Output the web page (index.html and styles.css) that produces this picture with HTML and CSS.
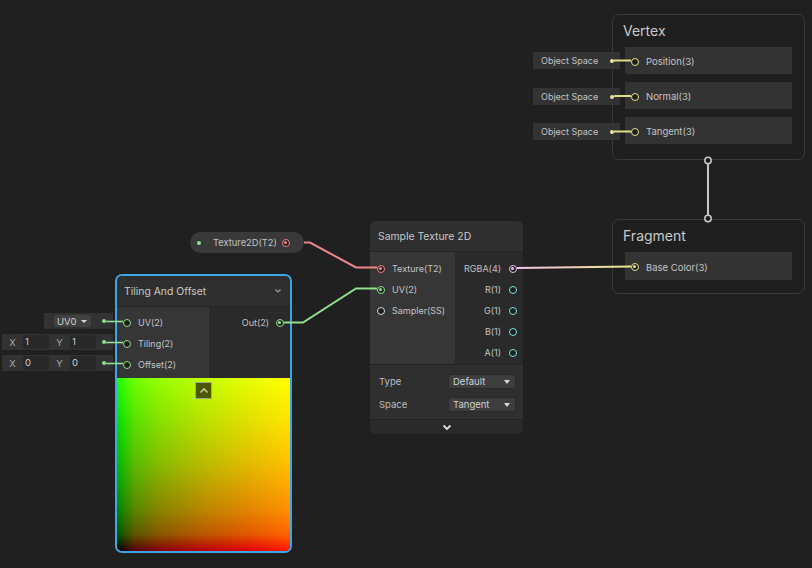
FILE: index.html
```html
<!DOCTYPE html>
<html>
<head>
<meta charset="utf-8">
<link rel="stylesheet" href="styles.css">
</head>
<body>
<div class="graph">

  <!-- Vertex context -->
  <div class="context vertex">
    <div class="ctx-title">Vertex</div>
    <div class="blocks">
      <div class="block"><span class="port yellow"></span><span class="lbl">Position(3)</span></div>
      <div class="block"><span class="port yellow"></span><span class="lbl">Normal(3)</span></div>
      <div class="block"><span class="port yellow"></span><span class="lbl">Tangent(3)</span></div>
    </div>
  </div>

  <div class="os-field os1"><span>Object Space</span><span class="dot ydot"></span></div>
  <div class="os-field os2"><span>Object Space</span><span class="dot ydot"></span></div>
  <div class="os-field os3"><span>Object Space</span><span class="dot ydot"></span></div>

  <!-- Fragment context -->
  <div class="context fragment">
    <div class="ctx-title">Fragment</div>
    <div class="blocks">
      <div class="block tall"><span class="port yellow on"></span><span class="lbl">Base Color(3)</span></div>
    </div>
  </div>

  <!-- Texture property -->
  <div class="prop">
    <span class="dot gdot"></span>
    <span class="prop-lbl">Texture2D(T2)</span>
    <span class="port red on"></span>
  </div>

  <!-- Sample Texture 2D -->
  <div class="node sample">
    <div class="node-head">Sample Texture 2D</div>
    <div class="node-body">
      <div class="col-in">
        <div class="row"><span class="port red on"></span><span class="lbl">Texture(T2)</span></div>
        <div class="row"><span class="port green on"></span><span class="lbl">UV(2)</span></div>
        <div class="row"><span class="port white"></span><span class="lbl">Sampler(SS)</span></div>
      </div>
      <div class="col-out">
        <div class="row"><span class="lbl">RGBA(4)</span><span class="port pink on"></span></div>
        <div class="row"><span class="lbl">R(1)</span><span class="port cyan"></span></div>
        <div class="row"><span class="lbl">G(1)</span><span class="port cyan"></span></div>
        <div class="row"><span class="lbl">B(1)</span><span class="port cyan"></span></div>
        <div class="row"><span class="lbl">A(1)</span><span class="port cyan"></span></div>
      </div>
    </div>
    <div class="settings">
      <div class="set-row"><span class="set-lbl">Type</span><span class="dropdown"><span>Default</span><span class="tri"></span></span></div>
      <div class="set-row"><span class="set-lbl">Space</span><span class="dropdown"><span>Tangent</span><span class="tri"></span></span></div>
    </div>
    <div class="node-foot">
      <svg width="10" height="7" viewBox="0 0 10 7"><polyline points="1.5,1.5 5,5 8.5,1.5" fill="none" stroke="#e0e0e0" stroke-width="1.8"/></svg>
    </div>
  </div>

  <!-- Inline inputs for Tiling And Offset -->
  <div class="inline in-uv">
    <span class="mini-dd"><span>UV0</span><span class="tri small"></span></span>
    <span class="dot gdot"></span>
  </div>
  <div class="inline in-tiling">
    <span class="axis">X</span><span class="num">1</span>
    <span class="axis">Y</span><span class="num">1</span>
    <span class="dot gdot"></span>
  </div>
  <div class="inline in-offset">
    <span class="axis">X</span><span class="num">0</span>
    <span class="axis">Y</span><span class="num">0</span>
    <span class="dot gdot"></span>
  </div>

  <!-- Tiling And Offset -->
  <div class="node tiling">
    <div class="node-head tiling-head">
      <span>Tiling And Offset</span>
      <svg width="8" height="6" viewBox="0 0 8 6"><polyline points="1.5,1.5 4,4 6.5,1.5" fill="none" stroke="#9a9a9a" stroke-width="1.2"/></svg>
    </div>
    <div class="node-body tiling-body">
      <div class="col-in">
        <div class="row"><span class="port green"></span><span class="lbl">UV(2)</span></div>
        <div class="row"><span class="port green"></span><span class="lbl">Tiling(2)</span></div>
        <div class="row"><span class="port green"></span><span class="lbl">Offset(2)</span></div>
      </div>
      <div class="col-out">
        <div class="row"><span class="lbl">Out(2)</span><span class="port green on"></span></div>
      </div>
    </div>
    <div class="preview">
      <span class="collapse">
        <svg width="10" height="7" viewBox="0 0 10 7"><polyline points="1.5,5.5 5,2 8.5,5.5" fill="none" stroke="#c8c8a8" stroke-width="1.6"/></svg>
      </span>
    </div>
  </div>

  <!-- Edges -->
  <svg class="edges" width="812" height="568" viewBox="0 0 812 568">
    <defs>
      <linearGradient id="py" x1="517" y1="0" x2="631" y2="0" gradientUnits="userSpaceOnUse">
        <stop offset="0" stop-color="#f4c2ec"/>
        <stop offset="1" stop-color="#e6e68a"/>
      </linearGradient>
    </defs>
    <polyline points="304,242.5 310,242.5 356,267.5 377,267.5" fill="none" stroke="#ef8585" stroke-width="2"/>
    <polyline points="284,322.5 303,322.5 356,288.5 377,288.5" fill="none" stroke="#8fe08a" stroke-width="2"/>
    <line x1="517" y1="268" x2="631" y2="266.5" stroke="url(#py)" stroke-width="2"/>
    <line x1="708" y1="164" x2="708" y2="215" stroke="#c8c8c8" stroke-width="2"/>
    <circle cx="708" cy="160.5" r="3.2" fill="#1f1f1f" stroke="#c8c8c8" stroke-width="1.5"/>
    <circle cx="708" cy="218.5" r="3.2" fill="#1f1f1f" stroke="#c8c8c8" stroke-width="1.5"/>
    <line x1="614" y1="60.5" x2="631" y2="60.5" stroke="#dede86" stroke-width="2"/>
    <line x1="614" y1="96" x2="631" y2="96" stroke="#dede86" stroke-width="2"/>
    <line x1="614" y1="131.5" x2="631" y2="131.5" stroke="#dede86" stroke-width="2"/>
    <line x1="106" y1="321.5" x2="123" y2="321.5" stroke="#8fe08a" stroke-width="1.6"/>
    <line x1="106" y1="342.5" x2="123" y2="342.5" stroke="#8fe08a" stroke-width="1.6"/>
    <line x1="106" y1="363.5" x2="123" y2="363.5" stroke="#8fe08a" stroke-width="1.6"/>
  </svg>
</div>
</body>
</html>
```

FILE: styles.css
```css
html, body {
  margin: 0;
  padding: 0;
  background: #202020;
}

body {
  font-family: Inter, "Noto Sans", "Liberation Sans", sans-serif;
  color: #c4c4c4;
  font-size: 9px;
}

.graph {
  position: relative;
  width: 812px;
  height: 568px;
  overflow: hidden;
  background: #202020;
}

.edges {
  position: absolute;
  left: 0;
  top: 0;
  pointer-events: none;
}

/* Ports */
.port {
  position: relative;
  flex: none;
  width: 8px;
  height: 8px;
  border-radius: 50%;
  border: 1.5px solid #c8c8c8;
  box-sizing: border-box;
  background: #1e1e1e;
}
.port.on::after {
  content: "";
  position: absolute;
  left: 1px;
  top: 1px;
  width: 3px;
  height: 3px;
  border-radius: 50%;
  background: currentColor;
}
.port.yellow { border-color: #e4e48a; color: #e4e48a; }
.port.red { border-color: #ef8585; color: #ef8585; }
.port.green { border-color: #8fe08a; color: #8fe08a; }
.port.pink { border-color: #f0c0ea; color: #f0c0ea; }
.port.cyan { border-color: #7fe0e4; color: #7fe0e4; }
.port.white { border-color: #d8d8d8; color: #d8d8d8; }

.lbl { font-size: 9px; }

.dot {
  flex: none;
  width: 4px;
  height: 4px;
  border-radius: 50%;
}
.ydot { background: #e8e89a; }
.gdot { background: #8fe08a; }

/* Contexts */
.context {
  position: absolute;
  box-sizing: border-box;
  border: 1px solid #3a3a3a;
  border-radius: 7px;
  background: #1f1f1f;
  padding: 0 12px;
}
.vertex { left: 612px; top: 14px; width: 193px; height: 146px; }
.fragment { left: 612px; top: 219px; width: 193px; height: 75px; }

.ctx-title {
  height: 32px;
  line-height: 32px;
  margin-left: -2px;
  font-size: 14px;
  color: #cacaca;
}

.blocks {
  display: flex;
  flex-direction: column;
  gap: 8px;
}
.block {
  height: 27px;
  background: #333333;
  display: flex;
  align-items: center;
  padding-left: 6px;
  padding-top: 2px;
  box-sizing: border-box;
  gap: 7px;
}
.block.tall { height: 28px; }
.block .lbl { font-size: 9.5px; }

.os-field {
  position: absolute;
  left: 533px;
  width: 87px;
  height: 17px;
  box-sizing: border-box;
  background: #333333;
  display: flex;
  align-items: center;
  justify-content: space-between;
  padding: 0 6px 0 8px;
  font-size: 9px;
  color: #c4c4c4;
}
.os1 { top: 52px; }
.os2 { top: 88px; }
.os3 { top: 123px; }

/* Property pill */
.prop {
  position: absolute;
  left: 190px;
  top: 232px;
  width: 114px;
  height: 21px;
  border-radius: 10.5px;
  background: #393939;
  display: flex;
  align-items: center;
  box-sizing: border-box;
  padding: 0 14px 0 7px;
}
.prop-lbl {
  margin-left: 12px;
  flex: 1;
  font-size: 9.3px;
}

/* Nodes */
.node {
  position: absolute;
  box-sizing: border-box;
  background: #2a2a2a;
  border-radius: 6px;
  overflow: hidden;
}
.node-head {
  height: 31px;
  line-height: 31px;
  padding-left: 8px;
  background: #2f2f2f;
  font-size: 10.4px;
  color: #c8c8c8;
  border-bottom: 1px solid #242424;
  box-sizing: border-box;
}
.node-body {
  display: flex;
  border-bottom: 1px solid #232323;
}
.col-in {
  background: #363636;
  padding-top: 6px;
  box-sizing: border-box;
}
.col-out {
  flex: 1;
  background: #2a2a2a;
  padding-top: 6px;
  box-sizing: border-box;
}
.row {
  height: 21px;
  display: flex;
  align-items: center;
}
.col-in .row { padding-left: 7px; gap: 7px; }
.col-out .row { justify-content: flex-end; padding-right: 6px; gap: 8px; }

.sample { left: 370px; top: 221px; width: 153px; }
.sample .node-body { height: 112px; }
.sample .col-in { width: 85px; }

.settings {
  height: 55px;
  background: #2f2f2f;
  padding-top: 5px;
  box-sizing: border-box;
  border-bottom: 1px solid #222;
}
.set-row {
  height: 23px;
  display: flex;
  align-items: center;
  padding: 0 7px 0 9px;
}
.set-lbl { flex: 1; font-size: 9.5px; color: #bdbdbd; }
.dropdown {
  width: 68px;
  height: 15px;
  box-sizing: border-box;
  background: #3e3e3e;
  border: 1px solid #2a2a2a;
  border-radius: 3px;
  display: flex;
  align-items: center;
  justify-content: space-between;
  padding: 0 5px 0 4px;
  font-size: 9.5px;
  color: #d0d0d0;
}
.tri {
  width: 0;
  height: 0;
  border-left: 3.5px solid transparent;
  border-right: 3.5px solid transparent;
  border-top: 4px solid #d8d8d8;
}
.tri.small {
  border-left-width: 3px;
  border-right-width: 3px;
  border-top-width: 3.5px;
}
.node-foot {
  height: 14px;
  background: #2a2a2a;
  display: flex;
  align-items: center;
  justify-content: center;
}

/* Tiling and offset */
.tiling {
  left: 115px;
  top: 274px;
  width: 177px;
  height: 279px;
  border: 2px solid #3ca6e6;
  border-radius: 7px;
}
.tiling-head {
  display: flex;
  align-items: center;
  justify-content: space-between;
  padding: 0 8px 0 7px;
  height: 31px;
}
.tiling .node-body { height: 71px; padding: 0; border-bottom: none; }
.tiling .col-in { width: 92px; padding-top: 5px; }
.tiling .col-out { padding-top: 5px; }
.tiling .col-in .row { padding-left: 6px; gap: 7px; }
.tiling .col-out .row { padding-right: 6px; gap: 7px; }

.preview {
  height: 173px;
  background:
    linear-gradient(to right,
      rgb(0,0,0) 0%,
      rgb(89,0,0) 10%,
      rgb(136,0,0) 25%,
      rgb(186,0,0) 50%,
      rgb(224,0,0) 75%,
      rgb(255,20,0) 100%),
    linear-gradient(to top,
      rgb(0,0,0) 0%,
      rgb(0,89,0) 10%,
      rgb(0,136,0) 25%,
      rgb(0,186,0) 50%,
      rgb(0,224,0) 75%,
      rgb(30,255,0) 100%);
  background-blend-mode: screen;
  display: flex;
  justify-content: center;
  padding-top: 4px;
  box-sizing: border-box;
}
.collapse {
  width: 17px;
  height: 17px;
  box-sizing: border-box;
  background: #4d5900;
  border: 1px solid #a0a890;
  display: flex;
  align-items: center;
  justify-content: center;
}

/* Inline inputs */
.inline {
  position: absolute;
  height: 16px;
  background: #323232;
  display: flex;
  align-items: center;
  box-sizing: border-box;
}
.in-uv { left: 44px; top: 313px; width: 69px; padding-left: 10px; }
.in-tiling { left: 2px; top: 334px; width: 111px; }
.in-offset { left: 2px; top: 355px; width: 111px; }
.in-uv .dot, .in-tiling .dot, .in-offset .dot { margin-left: auto; margin-right: 7px; }

.mini-dd {
  width: 37px;
  height: 12px;
  box-sizing: border-box;
  background: #414141;
  border-radius: 2px;
  display: flex;
  align-items: center;
  justify-content: space-between;
  padding: 0 4px 0 3px;
  font-size: 9.5px;
  color: #d0d0d0;
}
.axis {
  width: 21px;
  text-align: center;
  font-size: 9.5px;
  color: #a8a8a8;
}
.num {
  width: 26px;
  height: 14px;
  box-sizing: border-box;
  background: #282828;
  border-radius: 2px;
  padding-left: 2px;
  line-height: 14px;
  font-size: 9.5px;
  color: #d0d0d0;
}
```
